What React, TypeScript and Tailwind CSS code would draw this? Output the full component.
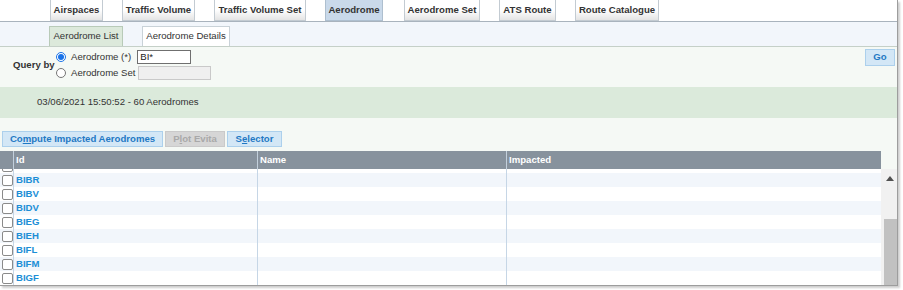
import { ReactNode } from 'react'

const tabs = [
  { label: 'Airspaces', w: 'w-[53px]' },
  { label: 'Traffic Volume', w: 'w-[73px]' },
  { label: 'Traffic Volume Set', w: 'w-[92px]' },
  { label: 'Aerodrome', w: 'w-[58px]', active: true },
  { label: 'Aerodrome Set', w: 'w-[76px] ml-[2px]' },
  { label: 'ATS Route', w: 'w-[57px]' },
  { label: 'Route Catalogue', w: 'w-[84px]' },
]

// first entry is the row scrolled half out of view
const rows = ['', 'BIBR', 'BIBV', 'BIDV', 'BIEG', 'BIEH', 'BIFL', 'BIFM', 'BIGF']

function Btn({ children, w, disabled }: { children: ReactNode; w: string; disabled?: boolean }) {
  return (
    <button
      className={`${w} h-[16px] border text-[9.6px] font-bold leading-none flex items-center justify-center ${
        disabled
          ? 'bg-[#d6d6d6] border-[#cacaca] text-[#a9a9a9]'
          : 'bg-[#d3e7f6] border-[#acd0ec] text-[#1f79c4]'
      }`}
    >
      {children}
    </button>
  )
}

function Checkbox() {
  return <span className="block w-[11px] h-[11px] border border-[#8a8a8a] rounded-[2px] bg-white" />
}

export default function App() {
  return (
    <div className="w-[903px] h-[290px] bg-white font-['Liberation_Sans',Arial,sans-serif] text-[#333]">
      <div className="w-[898px] h-[286px] border-r border-b border-[#9d9d9d] shadow-[2px_2px_2px_rgba(0,0,0,0.2)] flex flex-col overflow-hidden">
        {/* main tabs */}
        <div className="h-[22px] shrink-0 border-b border-[#a9b3bd] bg-white flex items-start pl-[50px] gap-[19px]">
          {tabs.map(t => (
            <div
              key={t.label}
              className={`${t.w} h-[21px] border-x border-b flex items-center justify-center text-[9.6px] font-bold ${
                t.active
                  ? 'bg-[#c9d9ea] border-[#aebfcf]'
                  : 'bg-gradient-to-b from-white via-white to-[#e4e4e4] border-[#c3cbd2]'
              }`}
            >
              {t.label}
            </div>
          ))}
        </div>

        {/* sub tabs */}
        <div className="h-[25px] shrink-0 bg-[#f2f6fb] border-b border-[#c5d0c8] flex items-end pl-[49px] gap-[19px]">
          <div className="w-[74px] h-[20px] border border-b-0 border-[#b8cab8] bg-[#dce9db] flex items-center justify-center text-[9.6px]">
            Aerodrome List
          </div>
          <div className="w-[88px] h-[20px] border border-b-0 border-[#c9d2d8] bg-white flex items-center justify-center text-[9.6px]">
            Aerodrome Details
          </div>
        </div>

        <div className="flex-1 bg-[#f5f9f5] flex flex-col">
          {/* query form */}
          <div className="h-[40px] shrink-0 flex items-start">
            <div className="flex items-center pt-[3px]">
              <span className="ml-[13px] text-[9.6px] font-bold w-[43px]">Query by</span>
              <div className="flex flex-col gap-[2px]">
                <div className="h-[14px] flex items-center">
                  <span className="w-[10px] h-[10px] rounded-full border border-[#1a73e8] bg-white flex items-center justify-center">
                    <span className="w-[6px] h-[6px] rounded-full bg-[#1a73e8]" />
                  </span>
                  <span className="ml-[5px] text-[9.6px]">Aerodrome (*)</span>
                  <input
                    readOnly
                    value="BI*"
                    className="ml-[6px] w-[54px] h-[14px] border border-[#6f6f6f] bg-white px-[2px] text-[9.6px] text-[#222] outline-none"
                  />
                </div>
                <div className="h-[14px] flex items-center">
                  <span className="w-[10px] h-[10px] rounded-full border border-[#767676] bg-white" />
                  <span className="ml-[5px] text-[9.6px]">Aerodrome Set</span>
                  <input
                    readOnly
                    disabled
                    className="ml-[2px] w-[73px] h-[14px] border border-[#c9c9c9] bg-[#efefef] outline-none"
                  />
                </div>
              </div>
            </div>
            <button className="ml-auto mr-[2px] mt-[2px] w-[30px] h-[17px] border border-[#acd0ec] bg-[#d3e7f6] text-[#1f79c4] text-[9.6px] font-bold">
              Go
            </button>
          </div>

          {/* status */}
          <div className="h-[31px] shrink-0 bg-[#dbeadb] flex items-center pl-[37px] text-[9.6px]">
            03/06/2021 15:50:52 - 60 Aerodromes
          </div>

          {/* actions */}
          <div className="mt-[13px] ml-[2px] flex gap-[2px]">
            <Btn w="w-[161px]">
              Co<u>m</u>pute Impacted Aerodromes
            </Btn>
            <Btn w="w-[60px]" disabled>
              P<u>l</u>ot Evita
            </Btn>
            <Btn w="w-[55px]">
              S<u>e</u>lector
            </Btn>
          </div>

          {/* table header */}
          <div className="mt-[4px] w-[881px] h-[18px] bg-[#87929d] flex text-[9.6px] font-bold text-white">
            <div className="w-[14px] border-r border-[#c3d0dc]" />
            <div className="w-[244px] border-r border-[#c3d0dc] pl-[2px] flex items-center">Id</div>
            <div className="w-[249px] border-r border-[#c3d0dc] pl-[2px] flex items-center">Name</div>
            <div className="flex-1 pl-[2px] flex items-center">Impacted</div>
          </div>

          {/* table body */}
          <div className="h-[116px] flex">
            <div className="w-[881px] bg-white overflow-hidden">
              <div className="-mt-[10px]">
                {rows.map((id, i) => (
                  <div key={i} className={`h-[14px] flex ${i % 2 === 1 ? 'bg-[#f2f6fb]' : 'bg-white'}`}>
                    <div className="w-[14px] border-r border-[#c6d6e6] flex items-center pl-[2px]">
                      <Checkbox />
                    </div>
                    <div className="w-[244px] border-r border-[#c6d6e6] pl-[2px] flex items-center text-[9.6px] font-bold text-[#1c8ed6]">
                      {id}
                    </div>
                    <div className="w-[249px] border-r border-[#c6d6e6]" />
                    <div className="flex-1" />
                  </div>
                ))}
              </div>
            </div>
            <div className="w-[16px] bg-[#f1f1f1] flex flex-col items-center">
              <svg width="8" height="5" viewBox="0 0 8 5" className="mt-[7px] ml-[1px]">
                <path d="M4 0 L8 5 L0 5 Z" fill="#505050" />
              </svg>
              <div className="mt-auto self-end w-[13px] h-[66px] bg-[#c1c1c1]" />
            </div>
          </div>
        </div>
      </div>
    </div>
  )
}
